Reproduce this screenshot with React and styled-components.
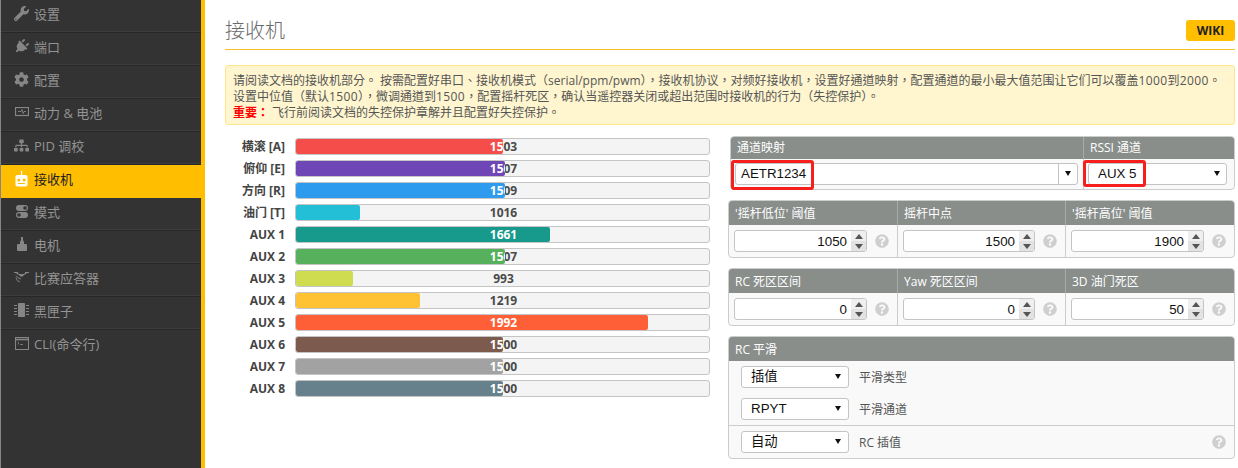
import React from "react";
import styled, { createGlobalStyle } from "styled-components";
import { FaWrench, FaPlug, FaCog, FaSitemap, FaQuestionCircle } from "react-icons/fa";

const Global = createGlobalStyle`
  html, body { margin: 0; padding: 0; background: #fff; }
  body { font-family: "Open Sans", "Noto Sans CJK SC", sans-serif; font-size: 12px; color: #555; overflow: hidden; }
  * { box-sizing: border-box; }
`;

const Page = styled.div`display: flex; width: 1238px; height: 468px; overflow: hidden;`;
const Sidebar = styled.nav`
  width: 205px; height: 468px; flex: none; background: #333;
  border-left: 1px solid #858585; border-right: 4px solid #ffbe00;
`;
const Item = styled.div`
  height: 33px; display: flex; align-items: center; gap: 5px; padding: 0 0 6px 13px;
  font-size: 13px; color: ${p => (p.$active ? "#222" : "#949494")};
  background: ${p => (p.$active ? "#ffbe00" : "transparent")};
  border-bottom: ${p => (p.$last ? "none" : p.$active ? "0" : "1px solid #272727")};
  box-shadow: ${p => (p.$active || p.$last ? "none" : "inset 0 -1px 0 #3c3c3c")};
`;
const IconSlot = styled.span`
  width: 15px; height: 16px; flex: none; display: flex; align-items: center; justify-content: center;
  color: ${p => (p.$active ? "#fff" : "#868686")}; font-size: 14px;
  svg { display: block; flex: none; }
`;
const Tilted = styled(FaPlug)`transform: rotate(45deg);`;

const Main = styled.main`flex: 1; min-width: 0; padding: 0 3px 0 20px;`;
const TitleRow = styled.header`
  height: 50px; display: flex; align-items: flex-start; justify-content: space-between;
  border-bottom: 1px solid #fbc02d; padding-top: 20px;
`;
const Title = styled.h1`margin: 0; font-size: 20px; line-height: 22px; font-weight: 300; color: #6a6a6a;`;
const Wiki = styled.a`
  width: 49px; height: 21px; border-radius: 3px; background: #ffbe00; color: #222;
  font-size: 12px; font-weight: 700; display: flex; align-items: center; justify-content: center;
`;
const Note = styled.div`
  margin-top: 15px; height: 60px; padding: 7px 7px 0; background: #fff5cf; border: 1px solid #ffe58a;
  border-radius: 3px; line-height: 16px; color: #555; white-space: nowrap;
  font-family: "Open Sans", "Noto Sans CJK TC", sans-serif;
  strong { color: #f00; font-weight: 700; margin-right: 3px; }
`;
const Latin = styled.span`letter-spacing: 0.4px;`;
const Columns = styled.div`display: grid; grid-template-columns: 485px 507px; gap: 18px;`;
const Bars = styled.div`padding-top: 13px; display: flex; flex-direction: column; gap: 5px;`;
const BarRow = styled.div`display: grid; grid-template-columns: 60px 415px; column-gap: 10px; align-items: center; height: 17px;`;
const BarName = styled.div`text-align: right; font-weight: 700; color: #444; line-height: 15px;`;
const Track = styled.div`
  position: relative; height: 17px; background: #f4f4f4; border: 1px solid #c4c4c4; border-radius: 3px;
`;
const Value = styled.span`
  position: absolute; left: 0; top: 0; width: 413px; height: 15px; padding-left: 2px; line-height: 15px; text-align: center;
  font-weight: 700; color: ${p => (p.$light ? "#fff" : "#4a4a4a")}; white-space: nowrap;
`;
const Fill = styled.div`
  position: absolute; left: 0; top: 0; height: 15px; overflow: hidden; border-radius: 2px;
  background: ${p => p.$color};
`;

const Right = styled.div`padding-top: 11px; display: flex; flex-direction: column;`;
const Box = styled.section`
  border: 1px solid #ccc; border-radius: 4px; background: #f9f9f9;
  margin-bottom: 10px; margin-left: ${p => p.$inset ?? 0}px;
`;
const Heads = styled.div`display: grid; grid-template-columns: ${p => p.$cols}; background: #898e8b; border-radius: 3px 3px 0 0;`;
const Head = styled.div`
  height: ${p => p.$h ?? 24}px; line-height: ${p => p.$lh ?? 26}px; padding-left: 6px; color: #fff; font-size: 12px;
  & + & { border-left: 1px solid #a8aba9; }
`;
const Cells = styled.div`display: grid; grid-template-columns: ${p => p.$cols};`;
const Cell = styled.div`
  display: flex; align-items: center; padding: ${p => p.$pad ?? "5px 8px 5px 5px"}; gap: 8px;
  & + & { border-left: 1px solid #ccc; }
`;
const SelectWrap = styled.div`
  position: relative; height: 22px; width: ${p => p.$w ?? "100%"}; flex: none;
  border: 1px solid #c4c4c4; border-radius: 3px; background: #fff;
`;
const NativeSelect = styled.select`
  appearance: none; display: block; width: 100%; height: 20px; border: 0; outline: 0; background: transparent;
  padding: 0 0 0 ${p => p.$pad ?? 9}px; margin: 0; color: #111;
  font-family: "Liberation Sans", "Noto Sans CJK SC", sans-serif; font-size: 13.33px; line-height: 20px;
`;
const Arrow = styled.i`
  position: absolute; top: 7px; right: ${p => p.$r ?? 7}px; width: 0; height: 0;
  border-left: 3px solid transparent; border-right: 3px solid transparent; border-top: 5px solid #111;
`;
const ArrowDivider = styled.i`position: absolute; top: 0; bottom: 0; right: 18px; width: 1px; background: #c4c4c4;`;
const Mark = styled.i`
  position: absolute; left: ${p => p.$l}px; top: 1px; width: ${p => p.$w}px; height: ${p => p.$h}px;
  border: 3px solid #f5201c; border-radius: 3px;
`;
const Rel = styled.div`position: relative;`;
const Spin = styled.div`
  position: relative; height: 22px; width: ${p => p.$w}px; flex: none; display: flex;
  border: 1px solid #c4c4c4; border-radius: 3px; background: #fff; overflow: hidden;
`;
const NumInput = styled.input`
  flex: 1; min-width: 0; border: 0; outline: 0; background: transparent; text-align: right; padding: 0 4px 0 0;
  font-family: "Liberation Sans", sans-serif; font-size: 13.33px; color: #111;
`;
const Stepper = styled.div`width: 15px; flex: none; display: flex; flex-direction: column; background: #efefef;`;
const StepUp = styled.span`
  flex: 1; display: flex; align-items: center; justify-content: center;
  &::before { content: ""; border-left: 4px solid transparent; border-right: 4px solid transparent; border-bottom: 5px solid #555; }
`;
const StepDown = styled(StepUp)`
  background: #e2e2e2;
  &::before { border-bottom: 0; border-top: 5px solid #555; }
`;
const Help = styled(FaQuestionCircle)`color: #cfcfcf; font-size: 14px; flex: none;`;
const SmoothRow = styled.div`
  display: flex; align-items: center; gap: 10px; padding: 5px 0 5px 12px; color: #555;
  border-top: ${p => (p.$line ? "1px solid #ccc" : "0")};
`;
const RightHelp = styled(Help)`margin-left: auto; margin-right: 8px;`;

const Battery = () => (
  <svg width="14" height="10" viewBox="0 0 14 10" fill="none" stroke="currentColor">
    <rect x="0.5" y="0.5" width="13" height="8" strokeWidth="1.2" />
    <path d="M3 4.5h3l1-2 1 4 1-2h2" strokeWidth="0.9" />
  </svg>
);
const Radio = () => (
  <svg width="13" height="16" viewBox="0 0 13 16">
    <rect x="6" y="0" width="1.2" height="5" fill="#fff" />
    <rect x="0.5" y="4" width="12" height="11.5" rx="1.8" fill="#fff" />
    <circle cx="3.8" cy="9" r="1.6" fill="#ffbe00" />
    <circle cx="9.2" cy="9" r="1.6" fill="#ffbe00" />
    <rect x="3" y="12" width="7" height="1" fill="#ffbe00" />
  </svg>
);
const Toggles = () => (
  <svg width="12" height="13" viewBox="0 0 12 13" fill="currentColor">
    <path d="M3 0h6a3 3 0 0 1 0 6H3a3 3 0 0 1 0-6zm6 1.2a1.8 1.8 0 1 0 0 3.6 1.8 1.8 0 0 0 0-3.6z" fillRule="evenodd" />
    <path d="M3 7h6a3 3 0 0 1 0 6H3a3 3 0 0 1 0-6zm0 1.2a1.8 1.8 0 1 0 0 3.6 1.8 1.8 0 0 0 0-3.6z" fillRule="evenodd" />
  </svg>
);
const Motor = () => (
  <svg width="10" height="14" viewBox="0 0 10 14" fill="currentColor">
    <path d="M4 0h2v3l1 2v2h2a1 1 0 0 1 1 1v5a1 1 0 0 1-1 1H1a1 1 0 0 1-1-1V8a1 1 0 0 1 1-1h2V5l1-2z" />
  </svg>
);
const Drone = () => (
  <svg width="15" height="12" viewBox="0 0 15 12" fill="none" stroke="currentColor">
    <path d="M0 1.5h4M11 1.5h4M2 1.5l3 2h5l3-2" strokeWidth="1.1" />
    <path d="M5 3.5h5l-1 2H6z" fill="currentColor" stroke="none" />
    <path d="M2 6.5a5 5 0 0 0 4 4.5M2 4.5a7 7 0 0 0 5 3.5" strokeWidth="0.9" />
  </svg>
);
const Chip = () => (
  <svg width="15" height="14" viewBox="0 0 15 14" fill="currentColor">
    <rect x="4" y="0" width="7" height="14" rx="0.8" />
    <path d="M0 2h3v1H0zM0 5h3v1H0zM0 8h3v1H0zM0 11h3v1H0zM12 2h3v1h-3zM12 5h3v1h-3zM12 8h3v1h-3zM12 11h3v1h-3z" />
  </svg>
);
const Terminal = () => (
  <svg width="14" height="13" viewBox="0 0 14 13" fill="none" stroke="currentColor">
    <rect x="0.5" y="0.5" width="13" height="12" strokeWidth="1" />
    <path d="M0.5 2.5h13" strokeWidth="1.6" />
    <path d="M2.5 5l1.5 1.2-1.5 1.2M5 7.5h3" strokeWidth="0.8" />
  </svg>
);

const nav = [
  ["设置", <FaWrench size={15} />],
  ["端口", <Tilted size={15} />],
  ["配置", <FaCog size={15} />],
  ["动力 & 电池", <Battery />],
  ["PID 调校", <FaSitemap size={15} />],
  ["接收机", <Radio />, true],
  ["模式", <Toggles />],
  ["电机", <Motor />],
  ["比赛应答器", <Drone />],
  ["黑匣子", <Chip />],
  ["CLI(命令行)", <Terminal />],
];

const channels = [
  ["横滚 [A]", 1503, "#f54e4a"],
  ["俯仰 [E]", 1507, "#6e46b5"],
  ["方向 [R]", 1509, "#2f9bee"],
  ["油门 [T]", 1016, "#22bfd6"],
  ["AUX 1", 1661, "#17998c"],
  ["AUX 2", 1507, "#56b05c"],
  ["AUX 3", 993, "#d0dc4f"],
  ["AUX 4", 1219, "#ffc233"],
  ["AUX 5", 1992, "#ff5f37"],
  ["AUX 6", 1500, "#7c5b4e"],
  ["AUX 7", 1500, "#a2a2a2"],
  ["AUX 8", 1500, "#66808c"],
];

const COLS3 = "168px 168px 1fr";

const NumberBox = ({ heads, values }) => (
  <Box>
    <Heads $cols={COLS3}>{heads.map(h => <Head key={h}>{h}</Head>)}</Heads>
    <Cells $cols={COLS3}>
      {values.map((v, i) => (
        <Cell key={i}>
          <Spin $w={i === 1 ? 132 : 133}>
            <NumInput defaultValue={v} />
            <Stepper><StepUp /><StepDown /></Stepper>
          </Spin>
          <Help />
        </Cell>
      ))}
    </Cells>
  </Box>
);

const Pick = ({ value, w, pad, r, children }) => (
  <SelectWrap $w={w}>
    <NativeSelect $pad={pad} defaultValue={value}><option>{value}</option></NativeSelect>
    {children}
    <Arrow $r={r} />
  </SelectWrap>
);

export default function App() {
  return (
    <Page>
      <Global />
      <Sidebar>
        {nav.map(([label, icon, active], i) => (
          <Item key={label} $active={active} $last={i === nav.length - 1}>
            <IconSlot $active={active}>{icon}</IconSlot>
            {label}
          </Item>
        ))}
      </Sidebar>
      <Main>
        <TitleRow>
          <Title>接收机</Title>
          <Wiki>WIKI</Wiki>
        </TitleRow>
        <Note lang="zh-Hant">
          请阅读文档的接收机部分。 按需配置好串口、接收机模式（serial/ppm/pwm），接收机协议，对频好接收机，设置好通道映射，配置通道的最小最大值范围让它们可以覆盖<Latin>1000</Latin>到<Latin>2000</Latin>。<br />
          设置中位值（默认<Latin>1500</Latin>），微调通道到<Latin>1500</Latin>，配置摇杆死区，确认当遥控器关闭或超出范围时接收机的行为（失控保护）。<br />
          <strong>重要：</strong>飞行前阅读文档的失控保护章解并且配置好失控保护。
        </Note>
        <Columns>
          <Bars>
            {channels.map(([name, val, color]) => (
              <BarRow key={name}>
                <BarName>{name}</BarName>
                <Track>
                  <Value>{val}</Value>
                  <Fill $color={color} style={{ width: `${((val - 800) / 1400) * 100}%` }}>
                    <Value $light>{val}</Value>
                  </Fill>
                </Track>
              </BarRow>
            ))}
          </Bars>
          <Right>
            <Box $inset={2}>
              <Heads $cols="352px 1fr">
                <Head $h={22} $lh={22}>通道映射</Head>
                <Head $h={22} $lh={22}>RSSI 通道</Head>
              </Heads>
              <Rel>
                <Cells $cols="352px 1fr">
                  <Cell $pad="4px 5px 4px 4px"><Pick value="AETR1234" pad={5} r={6}><ArrowDivider /></Pick></Cell>
                  <Cell $pad="4px 7px 4px 4px"><Pick value="AUX 5" pad={9} r={6} /></Cell>
                </Cells>
                <Mark $l={0} $w={83} $h={30} />
                <Mark $l={352} $w={63} $h={27} />
              </Rel>
            </Box>
            <NumberBox heads={["'摇杆低位' 阈值", "摇杆中点", "'摇杆高位' 阈值"]} values={[1050, 1500, 1900]} />
            <NumberBox heads={["RC 死区区间", "Yaw 死区区间", "3D 油门死区"]} values={[0, 0, 50]} />
            <Box>
              <Heads $cols="1fr"><Head>RC 平滑</Head></Heads>
              <SmoothRow><Pick value="插值" w="108px" /><span>平滑类型</span></SmoothRow>
              <SmoothRow><Pick value="RPYT" w="108px" /><span>平滑通道</span></SmoothRow>
              <SmoothRow $line><Pick value="自动" w="108px" /><span>RC 插值</span><RightHelp /></SmoothRow>
            </Box>
          </Right>
        </Columns>
      </Main>
    </Page>
  );
}
